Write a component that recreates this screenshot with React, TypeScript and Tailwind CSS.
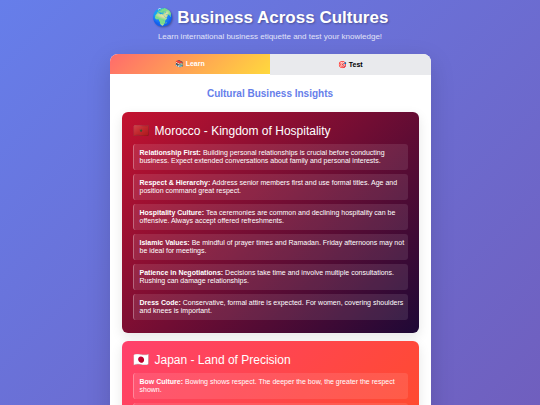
import { useState } from "react";

type Insight = { label: string; text: string };
type Country = { name: string; flag: string; title: string; gradient: string; insights: Insight[] };

const countries: Country[] = [
  {
    name: "Morocco",
    flag: "🇲🇦",
    title: "Morocco - Kingdom of Hospitality",
    gradient: "bg-[linear-gradient(135deg,#c41230_0%,#1e0836_100%)]",
    insights: [
      { label: "Relationship First:", text: "Building personal relationships is crucial before conducting business. Expect extended conversations about family and personal interests." },
      { label: "Respect & Hierarchy:", text: "Address senior members first and use formal titles. Age and position command great respect." },
      { label: "Hospitality Culture:", text: "Tea ceremonies are common and declining hospitality can be offensive. Always accept offered refreshments." },
      { label: "Islamic Values:", text: "Be mindful of prayer times and Ramadan. Friday afternoons may not be ideal for meetings." },
      { label: "Patience in Negotiations:", text: "Decisions take time and involve multiple consultations. Rushing can damage relationships." },
      { label: "Dress Code:", text: "Conservative, formal attire is expected. For women, covering shoulders and knees is important." },
    ],
  },
  {
    name: "Japan",
    flag: "🇯🇵",
    title: "Japan - Land of Precision",
    gradient: "bg-[linear-gradient(135deg,#ff416c_0%,#ff4b2b_100%)]",
    insights: [
      { label: "Bow Culture:", text: "Bowing shows respect. The deeper the bow, the greater the respect shown." },
      { label: "Business Cards:", text: "Present and receive cards with both hands." },
    ],
  },
];

function CountryCard({ country }: { country: Country }) {
  return (
    <section
      aria-label={country.name}
      className={`rounded-md px-[11px] pt-3 pb-[13px] text-white shadow-[0_4px_12px_rgba(0,0,0,0.1)] ${country.gradient}`}
    >
      <h3 className="flex items-center gap-1.5 text-[12px] leading-[14px]">
        <span className="text-[13px]">{country.flag}</span>
        {country.title}
      </h3>
      <ul className="mt-1.5 flex flex-col gap-1">
        {country.insights.map((item) => (
          <li
            key={item.label}
            className="rounded-[3px] border-l border-white/30 bg-white/10 py-[5px] pr-0.5 pl-1.5 text-[7px] leading-[8px]"
          >
            <strong>{item.label}</strong> {item.text}
          </li>
        ))}
      </ul>
    </section>
  );
}

export default function App() {
  const [tab, setTab] = useState<"learn" | "test">("learn");
  const active = "bg-[linear-gradient(135deg,#ff6b6b,#ffd93d)] leading-5 text-white";
  const idle = "bg-[#e9eaed] leading-[21px] text-black";
  return (
    <div className="min-h-screen bg-[linear-gradient(135deg,#667eea_0%,#764ba2_100%)] bg-[length:100%_1000px] font-['Liberation_Sans',Arial,sans-serif]">
      <div className="mx-auto w-full max-w-[321px] pt-2">
        <header className="text-center text-white">
          <h1 className="text-[17px] leading-5 font-bold [text-shadow:1px_1px_2px_rgba(0,0,0,0.3)]">
            🌍 Business Across Cultures
          </h1>
          <p className="mt-1 text-[8px] leading-[10px] opacity-80">
            Learn international business etiquette and test your knowledge!
          </p>
        </header>
        <main className="mt-3 overflow-hidden rounded-lg bg-white shadow-[0_8px_24px_rgba(0,0,0,0.15)]">
          <nav className="grid grid-cols-2 items-start text-[7px] font-bold">
            <button type="button" className={tab === "learn" ? active : idle} onClick={() => setTab("learn")}>
              📚 Learn
            </button>
            <button type="button" className={tab === "test" ? active : idle} onClick={() => setTab("test")}>
              🎯 Test
            </button>
          </nav>
          <div className="p-3">
            <h2 className="text-center text-[10px] leading-[14px] font-bold text-[#667eea]">
              Cultural Business Insights
            </h2>
            <div className="mt-[11px] flex flex-col gap-2">
              {countries.map((country) => (
                <CountryCard key={country.name} country={country} />
              ))}
            </div>
          </div>
        </main>
      </div>
    </div>
  );
}
